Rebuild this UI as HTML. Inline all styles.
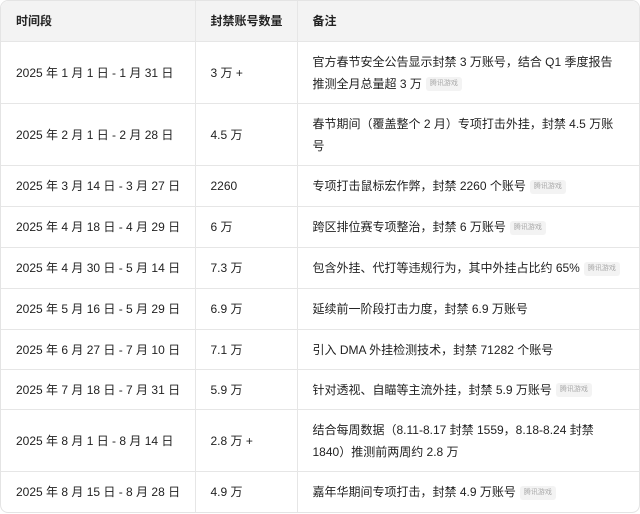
<!DOCTYPE html>
<html><head><meta charset="utf-8"><style>
body{margin:0;background:#fff;font-family:"Liberation Sans","Noto Sans CJK SC",sans-serif;color:#222;font-size:12px}
.w{position:absolute;left:0;top:0;width:638px;height:511px;border:1px solid #e4e4e4;border-radius:8px;overflow:hidden}
table{border-collapse:collapse;width:638px;table-layout:fixed}
td,th{border-right:1px solid #e6e6e6;border-bottom:1px solid #e6e6e6;padding:0 0 0 15px;text-align:left;line-height:22px;vertical-align:middle}
td:last-child,th:last-child{border-right:none;padding-right:20px}
th{background:#f3f3f3;font-weight:bold;height:40px}
.t{display:inline-block;font-size:7px;color:#aaa;background:#f3f3f3;border-radius:3px;padding:0 4px;line-height:14px;vertical-align:middle;margin-left:4px}
</style></head><body><div class="w"><table>
<colgroup><col style="width:194px"><col style="width:102px"><col></colgroup>
<tr><th>时间段</th><th>封禁账号数量</th><th>备注</th></tr>
<tr style="height:62px"><td>2025 年 1 月 1 日 - 1 月 31 日</td><td>3 万 +</td><td>官方春节安全公告显示封禁 3 万账号，结合 Q1 季度报告推测全月总量超 3 万<span class="t">腾讯游戏</span></td></tr>
<tr style="height:62px"><td>2025 年 2 月 1 日 - 2 月 28 日</td><td>4.5 万</td><td>春节期间（覆盖整个 2 月）专项打击外挂，封禁 4.5 万账号</td></tr>
<tr style="height:41px"><td>2025 年 3 月 14 日 - 3 月 27 日</td><td>2260</td><td>专项打击鼠标宏作弊，封禁 2260 个账号<span class="t">腾讯游戏</span></td></tr>
<tr style="height:41px"><td>2025 年 4 月 18 日 - 4 月 29 日</td><td>6 万</td><td>跨区排位赛专项整治，封禁 6 万账号<span class="t">腾讯游戏</span></td></tr>
<tr style="height:41px"><td>2025 年 4 月 30 日 - 5 月 14 日</td><td>7.3 万</td><td style="white-space:nowrap">包含外挂、代打等违规行为，其中外挂占比约 65%<span class="t">腾讯游戏</span></td></tr>
<tr style="height:41px"><td>2025 年 5 月 16 日 - 5 月 29 日</td><td>6.9 万</td><td>延续前一阶段打击力度，封禁 6.9 万账号</td></tr>
<tr style="height:40px"><td>2025 年 6 月 27 日 - 7 月 10 日</td><td>7.1 万</td><td>引入 DMA 外挂检测技术，封禁 71282 个账号</td></tr>
<tr style="height:40px"><td>2025 年 7 月 18 日 - 7 月 31 日</td><td>5.9 万</td><td>针对透视、自瞄等主流外挂，封禁 5.9 万账号<span class="t">腾讯游戏</span></td></tr>
<tr style="height:62px"><td>2025 年 8 月 1 日 - 8 月 14 日</td><td>2.8 万 +</td><td>结合每周数据（8.11-8.17 封禁 1559，8.18-8.24 封禁 1840）推测前两周约 2.8 万</td></tr>
<tr style="height:40px"><td style="border-bottom:none">2025 年 8 月 15 日 - 8 月 28 日</td><td style="border-bottom:none">4.9 万</td><td style="border-bottom:none">嘉年华期间专项打击，封禁 4.9 万账号<span class="t">腾讯游戏</span></td></tr>
</table></div></body></html>
